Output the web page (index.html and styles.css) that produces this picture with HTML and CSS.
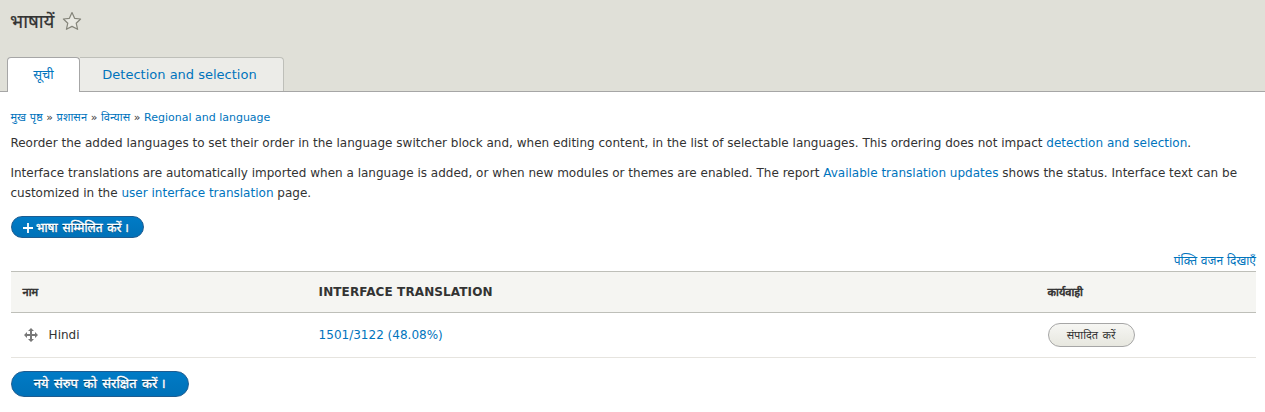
FILE: index.html
```html
<!DOCTYPE html>
<html lang="hi">
<head>
<meta charset="utf-8">
<title>भाषायें</title>
<link rel="stylesheet" href="styles.css">
</head>
<body>
<header class="header">
  <h1 class="title"><span class="title-text">भाषायें</span><svg class="star" width="20" height="20" viewBox="0 0 20 20"><path d="M10 1.5L12.6 7.3L18.6 8L14.2 12.2L15.6 18.3L10 15.4L4.4 18.3L5.8 12.2L1.4 8L7.4 7.3Z"/></svg></h1>
  <nav class="tabs"><a class="tab active">सूची</a><a class="tab second">Detection and selection</a></nav>
</header>
<main class="content">
  <nav class="breadcrumb"><a class="crumb">मुख पृष्ठ</a> » <a class="crumb">प्रशासन</a> » <a class="crumb">विन्यास</a> » <a>Regional and language</a></nav>
  <p class="help">Reorder the added languages to set their order in the language switcher block and, when editing content, in the list of selectable languages. This ordering does not impact <a>detection and selection</a>.</p>
  <p class="help">Interface translations are automatically imported when a language is added, or when new modules or themes are enabled. The report <a>Available translation updates</a> shows the status. Interface text can be customized in the <a>user interface translation</a> page.</p>
  <a class="button primary add"><svg class="plus" width="10" height="10" viewBox="0 0 10 10"><path d="M5 0V10M0 5H10"/></svg><span>भाषा सम्मिलित करें<span class="danda">।</span></span></a>
  <div class="weights"><a>पंक्ति वजन दिखाएँ</a></div>
  <div class="table">
    <div class="row head"><span class="cell hindi">नाम</span><span class="cell latin">INTERFACE TRANSLATION</span><span class="cell hindi">कार्यवाही</span></div>
    <div class="row"><span class="cell name"><svg class="move" width="16" height="16" viewBox="0 0 16 16"><path class="shaft" d="M8 2V14M2 8H14"/><path class="tips" d="M8 1L11 4H5ZM8 15L5 12H11ZM1 8L4 5V11ZM15 8L12 11V5Z"/></svg>Hindi</span><span class="cell"><a>1501/3122 (48.08%)</a></span><span class="cell"><a class="button edit">संपादित करें</a></span></div>
  </div>
  <a class="button primary save"><span>नये संरुप को संरक्षित करें<span class="danda">।</span></span></a>
</main>
</body>
</html>
```
FILE: styles.css
```css
* { box-sizing: border-box; }
body { margin: 0; height: 412px; overflow: hidden; background: #fff; color: #333; font: 12.02px/20px "DejaVu Sans", "Noto Sans", sans-serif; }
a { color: #0074bd; text-decoration: none; }
.header { height: 92px; background: #e0e0d8; border-bottom: 1px solid #a6a6a6; padding: 8px 7px 0; }
.title { display: flex; align-items: center; height: 26px; margin: 0 0 0 3px; font-size: 20px; font-weight: 400; }
.title-text { width: 52px; font-size: 18.7px; padding-top: 2px; white-space: nowrap; -webkit-text-stroke: .2px #333; }
.star { fill: #e9e9e2; stroke: #85857a; stroke-width: 1.2; stroke-linejoin: round; }
.tabs { display: flex; margin-top: 23px; height: 35px; font-size: 13px; }
.tab { display: flex; align-items: center; justify-content: center; border: 1px solid #bebfb9; border-bottom: 0; }
.active { width: 73px; background: #fff; border-color: #a6a6a6; border-radius: 4px 4px 0 0; }
.second { width: 204px; height: 34px; padding-right: 4px; border-left: 0; background: #ecece8; border-radius: 0 4px 0 0; }
.content { padding: 16px 9px 0 11px; }
.breadcrumb { font-size: 11.01px; height: 20px; margin-left: -.6px; }
.crumb { letter-spacing: .12px; }
.help { margin: 5px -1px 10px -.6px; }
.help + .help { margin-top: 10px; margin-bottom: 13px; }
.button { display: flex; align-items: center; justify-content: center; border-radius: 20px; }
.primary { color: #fff; border: 1px solid #1e5c90; background: linear-gradient(#007bc6, #0071b8); text-shadow: 0 1px rgba(0,0,0,.5); -webkit-text-stroke: .4px #fff; }
.add { width: 133px; height: 22px; gap: 3px; padding: 1px 3px 0 0; word-spacing: 1px; }
.danda { margin-left: 3px; }
.plus { fill: none; stroke: #fff; stroke-width: 1.8; }
.weights { margin-top: 13px; height: 20px; text-align: right; }
.table { border-top: 1px solid #bebfb9; }
.row { display: grid; grid-template-columns: 296px 729px 1fr; align-items: center; height: 45px; border-bottom: 1px solid #e6e4df; }
.head { height: 41px; background: #f5f5f2; border-color: #bebfb9; }
.cell { padding-left: 11.6px; }
.hindi { font-size: 11px; padding-top: 1px; -webkit-text-stroke: .6px #333; }
.latin { font-weight: 700; letter-spacing: .1px; }
.name { display: flex; align-items: center; gap: 10px; }
.shaft { fill: none; stroke: #787878; stroke-width: 2; }
.tips { fill: #787878; }
.edit { width: 87px; height: 24px; color: #333; border: 1px solid #a6a6a6; background: linear-gradient(#f6f6f3, #e7e7df); font-size: 11px; padding-top: 1px; word-spacing: 1px; }
.save { width: 178px; height: 26px; margin-top: 13px; padding-right: 1px; font-size: 13px; word-spacing: 1.4px; }
```
